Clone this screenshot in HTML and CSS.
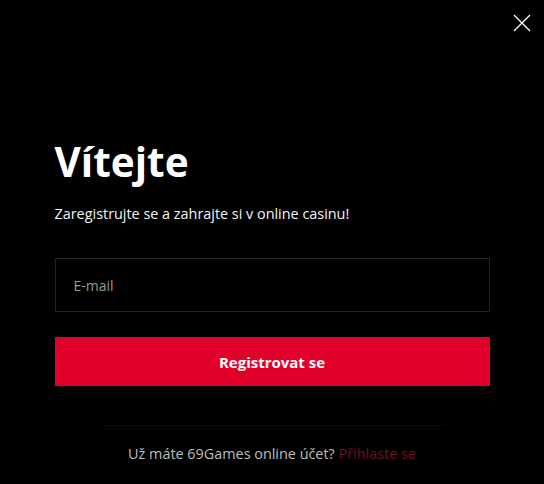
FILE: index.html
```html
<!DOCTYPE html>
<html lang="cs">
<head>
  <meta charset="UTF-8" />
  <meta name="viewport" content="width=device-width, initial-scale=1.0" />
  <title>Registrace</title>
  <link rel="stylesheet" href="styles.css">
</head>
<body>
  <button class="close" aria-label="Zavřít">
    <svg width="18" height="18" viewBox="0 0 18 18">
      <path d="M1 1L17 17M17 1L1 17" stroke="#fff" stroke-width="1.3" fill="none" />
    </svg>
  </button>

  <div class="modal">
    <h1>Vítejte</h1>
    <p class="lead">Zaregistrujte se a zahrajte si v online casinu!</p>

    <form class="form">
      <input type="email" class="field" placeholder="E-mail" />
      <button type="button" class="submit">Registrovat se</button>
    </form>

    <div class="footer">
      Už máte 69Games online účet? <a href="#" class="login">Přihlaste se</a>
    </div>
  </div>
</body>
</html>
```

FILE: styles.css
```css
body {
  margin: 0;
  background: #000;
  color: #f1f1f1;
  font-family: 'Open Sans', 'Noto Sans', sans-serif;
  height: 484px;
  overflow: hidden;
  position: relative;
}

.close {
  position: absolute;
  top: 14px;
  right: 13px;
  background: none;
  border: none;
  padding: 0;
  cursor: pointer;
}

.modal {
  width: 435px;
  margin: 0 auto;
  padding-top: 138px;
}

h1 {
  margin: 0;
  font-size: 40.5px;
  font-weight: 700;
  line-height: 48px;
  color: #fff;
}

.lead {
  margin: 18px 0 0;
  font-size: 14.4px;
  line-height: 20px;
  color: #f4f4f4;
}

.form {
  margin-top: 34px;
  display: flex;
  flex-direction: column;
  gap: 25px;
}

.field {
  box-sizing: border-box;
  height: 54px;
  padding: 0 18px;
  background: #000;
  border: 1px solid #222;
  color: #fff;
  font-family: inherit;
  font-size: 14px;
  outline: none;
}

.field::placeholder {
  color: #9a9a9a;
}

.submit {
  height: 49px;
  border: none;
  background: #e0002a;
  color: #fff;
  font-family: inherit;
  font-size: 15px;
  font-weight: 700;
  cursor: pointer;
}

.footer {
  margin: 39px 45px 0;
  padding-top: 19px;
  border-top: 1px solid #140709;
  text-align: center;
  font-size: 14.4px;
  line-height: 18px;
  color: #bdbdbd;
}

.login {
  color: #730f20;
  text-decoration: none;
}
```
